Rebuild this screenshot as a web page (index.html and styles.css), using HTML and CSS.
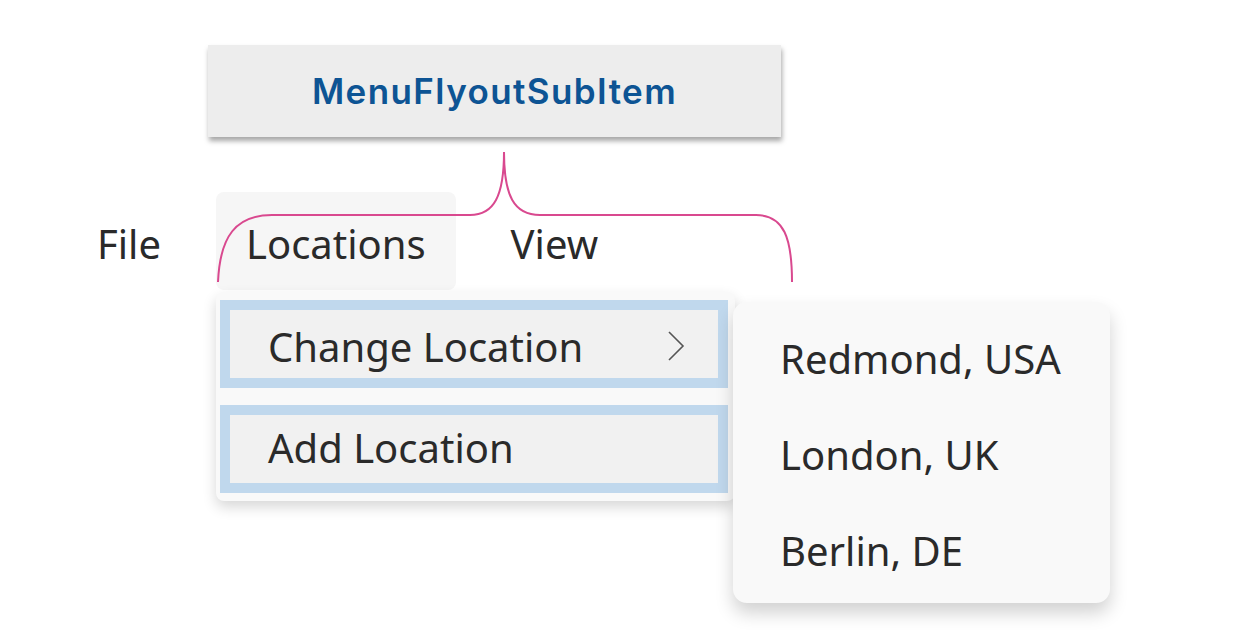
FILE: index.html
```html
<!DOCTYPE html>
<html>
<head>
    <meta charset="utf-8" />
    <title>MenuFlyoutSubItem</title>
    <link rel="stylesheet" href="styles.css">
</head>
<body>
<div class="stage">
    <div class="callout">MenuFlyoutSubItem</div>

    <!-- brace pointing from the label down to the menu bar -->
    <svg class="brace" width="1246" height="638" viewBox="0 0 1246 638">
        <path d="M218 282 C220 236 236 215 272 215 L470 215 C494 215 504 196 504 152 C504 196 514 215 540 215 L756 215 C784 215 792 238 792 282" />
    </svg>

    <div class="menubar">
        <div class="bar-item">File</div>
        <div class="bar-item active">Locations</div>
        <div class="bar-item">View</div>
    </div>

    <div class="flyouts">
        <div class="menu">
            <div class="menu-item sub">
                <span>Change Location</span>
                <svg class="chevron" width="20" height="32" viewBox="0 0 20 32">
                    <polyline points="3,2 17,16 3,30" />
                </svg>
            </div>
            <div class="menu-item">
                <span>Add Location</span>
            </div>
        </div>
        <div class="submenu">
            <div class="sub-item">Redmond, USA</div>
            <div class="sub-item">London, UK</div>
            <div class="sub-item">Berlin, DE</div>
        </div>
    </div>
</div>
</body>
</html>
```

FILE: styles.css
```css
body {
    margin: 0;
    background: #fff;
}
.stage {
    position: relative;
    width: 1246px;
    height: 638px;
    overflow: hidden;
    font-family: "Noto Sans", "Open Sans", sans-serif;
    color: #2a2a2a;
}
.callout {
    margin: 45px 0 0 208px;
    width: 573px;
    height: 92px;
    background: #ededed;
    box-shadow: 1px 4px 5px rgba(0, 0, 0, 0.35);
    display: flex;
    align-items: center;
    justify-content: center;
    font-family: Inter, "Noto Sans", sans-serif;
    font-weight: 600;
    font-size: 35px;
    letter-spacing: 1.4px;
    color: #0d5494;
}
.brace {
    position: absolute;
    left: 0;
    top: 0;
    pointer-events: none;
}
.brace path {
    fill: none;
    stroke: #d9498f;
    stroke-width: 2;
}
.menubar {
    display: flex;
    align-items: stretch;
    gap: 25px;
    height: 98px;
    margin-top: 55px;
    padding-left: 67px;
}
.bar-item {
    display: flex;
    align-items: center;
    padding: 4px 30px 0;
    border-radius: 8px;
    font-size: 40px;
}
.bar-item.active {
    background: #f6f6f6;
}
.flyouts {
    display: flex;
    align-items: flex-start;
    margin: 2px 0 0 216px;
}
.menu {
    width: 508px;
    padding: 8px 7px 8px 4px;
    background: #f9f9f9;
    border-radius: 8px;
    box-shadow: 0 6px 14px rgba(0, 0, 0, 0.16);
}
.menu-item {
    display: flex;
    align-items: center;
    justify-content: space-between;
    height: 64px;
    padding: 0 32px 4px 38px;
    border: 10px solid #c0d8ed;
    background: #f1f1f1;
    font-size: 40px;
}
.menu-item.sub {
    padding: 4px 32px 0 38px;
}
.menu-item + .menu-item {
    margin-top: 17px;
}
.chevron polyline {
    fill: none;
    stroke: #555;
    stroke-width: 1.6;
}
.submenu {
    width: 330px;
    height: 293px;
    margin: 10px 0 0 -2px;
    padding: 8px 0 0 47px;
    background: #f9f9f9;
    border-radius: 14px;
    box-shadow: 0 10px 18px rgba(0, 0, 0, 0.18);
}
.sub-item {
    height: 96px;
    display: flex;
    align-items: center;
    font-size: 40px;
}
```
